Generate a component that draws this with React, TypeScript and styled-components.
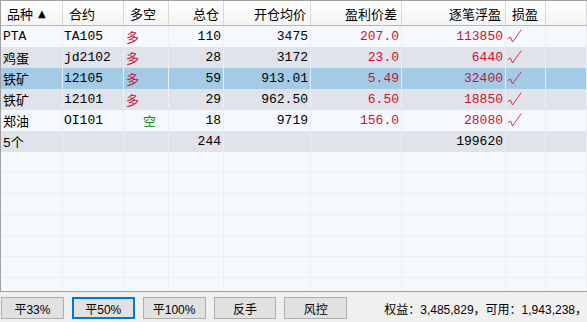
import React from "react";
import styled, { createGlobalStyle, css } from "styled-components";

const Global = createGlobalStyle`
  html, body { margin: 0; padding: 0; background: #f0f0f0; }
  body { width: 587px; height: 322px; overflow: hidden; }
`;

const COLS = "62px 61px 45px 55px 87px 91px 104px 40px 1fr";

const Page = styled.div`
  display: flex;
  flex-direction: column;
  width: 587px;
  height: 322px;
  overflow: hidden;
`;

const Table = styled.div`
  height: 292px;
  box-sizing: border-box;
  border-top: 1px solid #a0a0a0;
  border-left: 1px solid #a0a0a0;
  border-bottom: 1px solid #a0a0a0;
  background: #f5f8fd;
  overflow: hidden;
  display: flex;
  flex-direction: column;
`;

const HeaderRow = styled.div`
  display: grid;
  grid-template-columns: ${COLS};
  height: 24px;
  flex: none;
  border-bottom: 1px solid #b8b8b8;
  background: linear-gradient(#ffffff, #f4f4f4);
  font-family: "Noto Sans CJK SC", "Liberation Sans", sans-serif;
  font-size: 13px;
  color: #000;
`;

const HeadCell = styled.div<{ $right?: boolean }>`
  display: flex;
  align-items: center;
  justify-content: ${(p) => (p.$right ? "flex-end" : "flex-start")};
  padding: ${(p) => (p.$right ? "0 4px 0 0" : "0 0 0 6px")};
  border-right: 1px solid #d9d9d9;
  white-space: nowrap;
  overflow: hidden;
`;

const SortMark = styled.span`
  font-size: 10px;
  margin-left: 5px;
  font-family: "DejaVu Sans", sans-serif;
`;

type Variant = "light" | "gray" | "selected";

const rowBg: Record<Variant, string> = {
  light: "#f5f8fd",
  gray: "#e0e3e9",
  selected: "#a3cbe6",
};

const Row = styled.div<{ $v: Variant }>`
  display: grid;
  grid-template-columns: ${COLS};
  height: 21px;
  flex: none;
  background: ${(p) => rowBg[p.$v]};
  font-family: "Liberation Mono", "Noto Sans CJK SC", monospace;
  font-size: 13px;
  color: #000;
`;

const EmptyRow = styled(Row)`
  border-bottom: 1px solid #eaeff7;
  box-sizing: border-box;
`;

const Cell = styled.div<{ $right?: boolean; $tone?: "red" | "green"; $indent?: number }>`
  display: flex;
  align-items: center;
  justify-content: ${(p) => (p.$right ? "flex-end" : "flex-start")};
  padding: ${(p) => (p.$right ? "0 2px 0 0" : `0 0 0 ${p.$indent ?? 2}px`)};
  border-right: 1px solid #ebeff5;
  white-space: nowrap;
  overflow: hidden;
  ${(p) =>
    p.$tone === "red" &&
    css`
      color: #cc1133;
    `}
  ${(p) =>
    p.$tone === "green" &&
    css`
      color: #119011;
    `}
`;

const CheckIcon = () => (
  <svg width="15" height="15" viewBox="0 0 15 15" aria-label="√">
    <polyline
      points="1,9.5 3.5,8 5.5,13 14,1"
      fill="none"
      stroke="#d0203c"
      strokeWidth="0.9"
      strokeLinejoin="round"
      strokeLinecap="round"
    />
  </svg>
);

const Bar = styled.div`
  height: 30px;
  display: flex;
  align-items: center;
  gap: 8px;
  padding-left: 1px;
  background: #f0f0f0;
  font-family: "Noto Sans CJK SC", "Liberation Sans", sans-serif;
  font-size: 12px;
`;

const Button = styled.button<{ $focused?: boolean }>`
  width: 63px;
  height: 22px;
  margin-top: 2px;
  box-sizing: border-box;
  padding: 0;
  background: #e1e1e1;
  border: ${(p) => (p.$focused ? "2px solid #0078d7" : "1px solid #adadad")};
  font-family: "Liberation Sans", "Noto Sans CJK SC", sans-serif;
  font-size: 12px;
  color: #000;
`;

const Summary = styled.div`
  margin-left: 29px;
  margin-top: 2px;
  white-space: nowrap;
  font-family: "Liberation Sans", "Noto Sans CJK SC", sans-serif;
  font-size: 12px;
  color: #000;
`;

const rows = [
  { name: "PTA", code: "TA105", dir: "多", qty: "110", price: "3475", diff: "207.0", pnl: "113850" },
  { name: "鸡蛋", code: "jd2102", dir: "多", qty: "28", price: "3172", diff: "23.0", pnl: "6440" },
  { name: "铁矿", code: "i2105", dir: "多", qty: "59", price: "913.01", diff: "5.49", pnl: "32400" },
  { name: "铁矿", code: "i2101", dir: "多", qty: "29", price: "962.50", diff: "6.50", pnl: "18850" },
  { name: "郑油", code: "OI101", dir: "空", qty: "18", price: "9719", diff: "156.0", pnl: "28080" },
];

const variants: Variant[] = ["light", "gray", "selected", "gray", "light"];

export default function App() {
  return (
    <Page>
      <Global />
      <Table>
        <HeaderRow>
          <HeadCell>
            品种<SortMark>▲</SortMark>
          </HeadCell>
          <HeadCell>合约</HeadCell>
          <HeadCell>多空</HeadCell>
          <HeadCell $right>总仓</HeadCell>
          <HeadCell $right>开仓均价</HeadCell>
          <HeadCell $right>盈利价差</HeadCell>
          <HeadCell $right>逐笔浮盈</HeadCell>
          <HeadCell>损盈</HeadCell>
          <HeadCell />
        </HeaderRow>
        {rows.map((r, i) => (
          <Row key={i} $v={variants[i]}>
            <Cell>{r.name}</Cell>
            <Cell $indent={1}>{r.code}</Cell>
            {r.dir === "多" ? (
              <Cell $tone="red">{r.dir}</Cell>
            ) : (
              <Cell $tone="green" $indent={19}>
                {r.dir}
              </Cell>
            )}
            <Cell $right>{r.qty}</Cell>
            <Cell $right>{r.price}</Cell>
            <Cell $right $tone="red">
              {r.diff}
            </Cell>
            <Cell $right $tone="red">
              {r.pnl}
            </Cell>
            <Cell $indent={1}>
              <CheckIcon />
            </Cell>
            <Cell />
          </Row>
        ))}
        <Row $v="gray">
          <Cell>5个</Cell>
          <Cell />
          <Cell />
          <Cell $right>244</Cell>
          <Cell />
          <Cell />
          <Cell $right>199620</Cell>
          <Cell />
          <Cell />
        </Row>
        {Array.from({ length: 7 }).map((_, i) => (
          <EmptyRow key={`e${i}`} $v="light">
            {Array.from({ length: 9 }).map((__, j) => (
              <Cell key={j} />
            ))}
          </EmptyRow>
        ))}
      </Table>
      <Bar>
        <Button>平33%</Button>
        <Button $focused>平50%</Button>
        <Button>平100%</Button>
        <Button>反手</Button>
        <Button>风控</Button>
        <Summary>权益：3,485,829，可用：1,943,238，</Summary>
      </Bar>
    </Page>
  );
}
